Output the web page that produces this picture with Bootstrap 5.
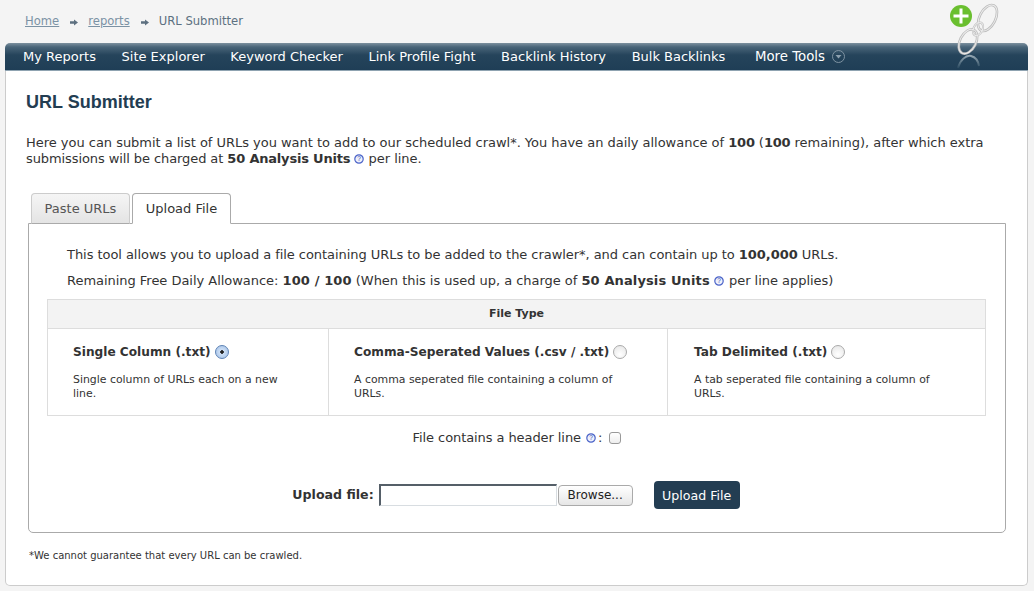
<!DOCTYPE html>
<html lang="en">
<head>
<meta charset="utf-8">
<title>URL Submitter</title>
<link href="https://cdn.jsdelivr.net/npm/bootstrap@5.3.0/dist/css/bootstrap.min.css" rel="stylesheet">
<style>
html,body{height:100%;}
body{background:#f4f4f4;font-family:"DejaVu Sans",Verdana,sans-serif;font-size:13px;color:#333;overflow:hidden;}
.page-shell{position:relative;width:1023px;margin-left:5px;}
.crumb-row{height:43px;padding:14px 0 0 20px;font-size:11.6px;line-height:15px;color:#5c7080;}
.crumb-row a{color:#7b92a4;}
.crumb-row svg{margin:0 10px 0 11px;vertical-align:-1px;}
.logo-art{position:absolute;right:20px;top:0;}
.main-nav{height:28px;background:linear-gradient(#7c909e 0,#496579 4px,#25445b 12px,#1f3e56 100%);border-radius:5px 5px 0 0;border-bottom:1px solid #8fa3b1;padding-left:18px;}
.main-nav a{color:#fff;font-size:13px;line-height:26px;text-decoration:none;margin-right:25.6px;white-space:nowrap;}
.main-nav a.more-link{font-size:13.3px;margin-left:4px;line-height:25px;}
.more-caret{display:inline-block;vertical-align:-2px;margin-left:3px;}
.content-panel{background:#fff;border:1px solid #ccc;border-top:0;border-radius:0 0 5px 5px;height:515px;padding:0 22px 0 20px;}
.page-title{font-family:"Liberation Sans",Arial,sans-serif;font-weight:700;font-size:18px;line-height:22px;color:#233d52;margin:0;padding-top:20px;height:64px;}
.intro-text{line-height:16px;margin:0;height:58px;white-space:nowrap;letter-spacing:-.025px;}
.intro-text b{letter-spacing:-.2px;}
.intro-tail{letter-spacing:-.09px;}
.intro-text .help-mark{margin:0;}
.tab-strip{border-bottom:0;padding-left:5px;height:31px;gap:2px;flex-wrap:nowrap;margin-left:0;position:relative;z-index:1;}
.tab-strip .nav-link{width:99px;height:31px;padding:0;text-align:center;line-height:29px;font-size:13px;border:1px solid #ccc;border-bottom:1px solid #aaa;border-radius:4px 4px 0 0;background:linear-gradient(#f5f5f5,#e4e4e4);color:#555;}
.tab-strip .nav-link.active{background:#fff;color:#333;border-color:#aaa;border-bottom-color:#fff;}
.tab-body{margin-left:2px;width:978px;height:310px;border:1px solid #aaa;border-radius:0 0 5px 5px;margin-top:-1px;padding:0 18px;}
.tab-line{margin:0;padding-left:20px;line-height:18px;white-space:nowrap;}
.tab-line.first-line{padding-top:22px;height:44px;letter-spacing:-.05px;}
.tab-line.second-line{padding-top:4px;height:31px;letter-spacing:-.03px;}
.tab-line.second-line b{letter-spacing:.12px;}
.tab-line .help-mark{margin:0 1px 0 0;}
.type-table{width:938px;table-layout:fixed;margin:0;border-color:#ddd;font-size:10.9px;line-height:14px;}
.type-table th{background:#f3f3f3;text-align:center;height:29px;padding:0;vertical-align:middle;font-size:11px;color:#333;box-shadow:none;}
.type-table td{padding:14px 25px 14px 25px;height:87px;vertical-align:top;color:#333;background:#fff;}
.type-table td:last-child{padding-left:26px;}
.type-heading{font-weight:700;font-size:12.15px;line-height:18px;margin-bottom:12px;white-space:nowrap;display:flex;align-items:center;gap:4px;}
.round-pick{appearance:none;width:14px;height:14px;margin:0;border:1px solid #aaa;border-radius:50%;background:radial-gradient(circle at 50% 70%,#fff,#e4e4e4);}
.round-pick:checked{border-color:#5f84b5;background:radial-gradient(circle,#222 0 1.5px,#cfe0f5 2px,#9dbde6 100%);}
.header-line{height:44px;padding:13px 0 0 0;line-height:18px;letter-spacing:-.08px;}
.tick-pick{appearance:none;width:12px;height:12px;margin:0 0 0 3px;border:1px solid #999;border-radius:3px;background:linear-gradient(#fff,#eee);vertical-align:-2px;}
.upload-row{height:34px;margin-top:18px;padding-right:2px;font-size:12.6px;}
.upload-row label{font-weight:700;margin-right:5px;}
.path-box{width:178px;height:22px;border:1px solid #d8dde1;border-top:2px solid #555f68;border-left:2px solid #555f68;background:#fff;padding:0;border-radius:0;}
.browse-btn{width:75px;height:21px;padding:0;margin-left:1px;font-size:12px;line-height:19px;color:#222;background:linear-gradient(#fff,#e6e6e6);border:1px solid #aaa;border-radius:4px;}
.submit-btn{width:86px;height:28px;padding:1px 0 0;margin-left:21px;font-size:12.6px;line-height:26px;color:#fff;background:#233d52;border:0;border-radius:4px;}
.foot-note{font-size:10px;line-height:14px;margin:0;padding:16px 0 0 3px;color:#333;}
.help-mark{vertical-align:-1px;margin:0 2px 0 1px;}
</style>
</head>
<body>
<div class="page-shell">
  <div class="crumb-row"><a href="#">Home</a><svg width="8" height="7" viewBox="0 0 9 7"><path d="M0 2.2h4.5V0L9 3.5 4.5 7V4.8H0z" fill="#5d7080"/></svg><a href="#">reports</a><svg width="8" height="7" viewBox="0 0 9 7"><path d="M0 2.2h4.5V0L9 3.5 4.5 7V4.8H0z" fill="#5d7080"/></svg>URL Submitter</div>
  <svg class="logo-art" width="64" height="72" viewBox="0 0 64 72" aria-hidden="true">
    <defs><linearGradient id="fadeRing" x1="0" y1="0" x2="0" y2="1"><stop offset="0" stop-color="#93a5b1"/><stop offset="1" stop-color="#2a4a60"/></linearGradient></defs>
    <g fill="none" stroke="#bdbdbd" stroke-width="2.6">
      <ellipse cx="43.500" cy="18" rx="8" ry="14" transform="rotate(27 43.500 18)"/>
      <ellipse cx="24" cy="41.500" rx="8" ry="13" transform="rotate(27 24 41.500)"/>
      <ellipse cx="34" cy="29" rx="4.500" ry="7" transform="rotate(27 34 29)" stroke-width="2"/>
    </g>
    <g fill="none" stroke="#eeeeee" stroke-width=".9">
      <ellipse cx="43.500" cy="18" rx="8" ry="14" transform="rotate(27 43.500 18)"/>
      <ellipse cx="24" cy="41.500" rx="8" ry="13" transform="rotate(27 24 41.500)"/>
      <ellipse cx="34" cy="29" rx="4.500" ry="7" transform="rotate(27 34 29)"/>
    </g>
    <path d="M14 68c2-8 8-13 13-12 4 1 7 4 8 10" fill="none" stroke="url(#fadeRing)" stroke-width="2"/>
    <circle cx="17" cy="16" r="11" fill="#6abf2f"/>
    <path d="M17 8.500v15M9.500 16h15" stroke="#fff" stroke-width="3"/>
  </svg>
  <nav class="main-nav d-flex align-items-center">
    <a href="#">My Reports</a><a href="#">Site Explorer</a><a href="#">Keyword Checker</a><a href="#">Link Profile Fight</a><a href="#">Backlink History</a><a href="#">Bulk Backlinks</a><a class="more-link" href="#">More Tools <svg class="more-caret" width="13" height="13" viewBox="0 0 13 13"><circle cx="6.500" cy="6.500" r="6" fill="none" stroke="#7f93a2"/><path d="M3.500 5h6l-3 3.500z" fill="#8ea1af"/></svg></a>
  </nav>
  <div class="content-panel">
    <h1 class="page-title">URL Submitter</h1>
    <p class="intro-text">Here you can submit a list of URLs you want to add to our scheduled crawl*. You have an daily allowance of <b>100</b> (<b>100</b> remaining), after which extra<br><span class="intro-tail">submissions will be charged at</span> <b>50 Analysis Units</b> <svg class="help-mark" width="10" height="10" viewBox="0 0 10 10"><circle cx="5" cy="5" r="4.200" fill="#eef1fb" stroke="#4a62c8" stroke-width="1.200"/><text x="5" y="7.300" font-size="6.500" text-anchor="middle" fill="#3a50b0" font-family="Liberation Sans">?</text></svg> per line.</p>
    <ul class="nav nav-tabs tab-strip">
      <li class="nav-item"><a class="nav-link" href="#">Paste URLs</a></li>
      <li class="nav-item"><a class="nav-link active" href="#">Upload File</a></li>
    </ul>
    <div class="tab-body">
      <p class="tab-line first-line">This tool allows you to upload a file containing URLs to be added to the crawler*, and can contain up to <b>100,000</b> URLs.</p>
      <p class="tab-line second-line">Remaining Free Daily Allowance: <b>100 / 100</b> (When this is used up, a charge of <b>50 Analysis Units</b> <svg class="help-mark" width="10" height="10" viewBox="0 0 10 10"><circle cx="5" cy="5" r="4.200" fill="#eef1fb" stroke="#4a62c8" stroke-width="1.200"/><text x="5" y="7.300" font-size="6.500" text-anchor="middle" fill="#3a50b0" font-family="Liberation Sans">?</text></svg> per line applies)</p>
      <table class="table table-bordered type-table">
        <colgroup><col style="width:281px"><col style="width:339px"><col style="width:318px"></colgroup>
        <thead><tr><th colspan="3">File Type</th></tr></thead>
        <tbody><tr>
          <td><div class="type-heading">Single Column (.txt) <input class="round-pick" type="radio" name="ftype" checked></div>Single column of URLs each on a new line.</td>
          <td><div class="type-heading">Comma-Seperated Values (.csv / .txt) <input class="round-pick" type="radio" name="ftype"></div>A comma seperated file containing a column of URLs.</td>
          <td><div class="type-heading">Tab Delimited (.txt) <input class="round-pick" type="radio" name="ftype"></div>A tab seperated file containing a column of URLs.</td>
        </tr></tbody>
      </table>
      <div class="header-line text-center">File contains a header line <svg class="help-mark" width="10" height="10" viewBox="0 0 10 10"><circle cx="5" cy="5" r="4.200" fill="#eef1fb" stroke="#4a62c8" stroke-width="1.200"/><text x="5" y="7.300" font-size="6.500" text-anchor="middle" fill="#3a50b0" font-family="Liberation Sans">?</text></svg>: <input class="tick-pick" type="checkbox"></div>
      <div class="upload-row d-flex justify-content-center align-items-center">
        <label>Upload file:</label><input class="path-box" type="text"><button class="btn browse-btn" type="button">Browse...</button><button class="btn submit-btn" type="button">Upload File</button>
      </div>
    </div>
    <p class="foot-note">*We cannot guarantee that every URL can be crawled.</p>
  </div>
</div>
<script src="https://cdn.jsdelivr.net/npm/bootstrap@5.3.0/dist/js/bootstrap.bundle.min.js"></script>
</body>
</html>
